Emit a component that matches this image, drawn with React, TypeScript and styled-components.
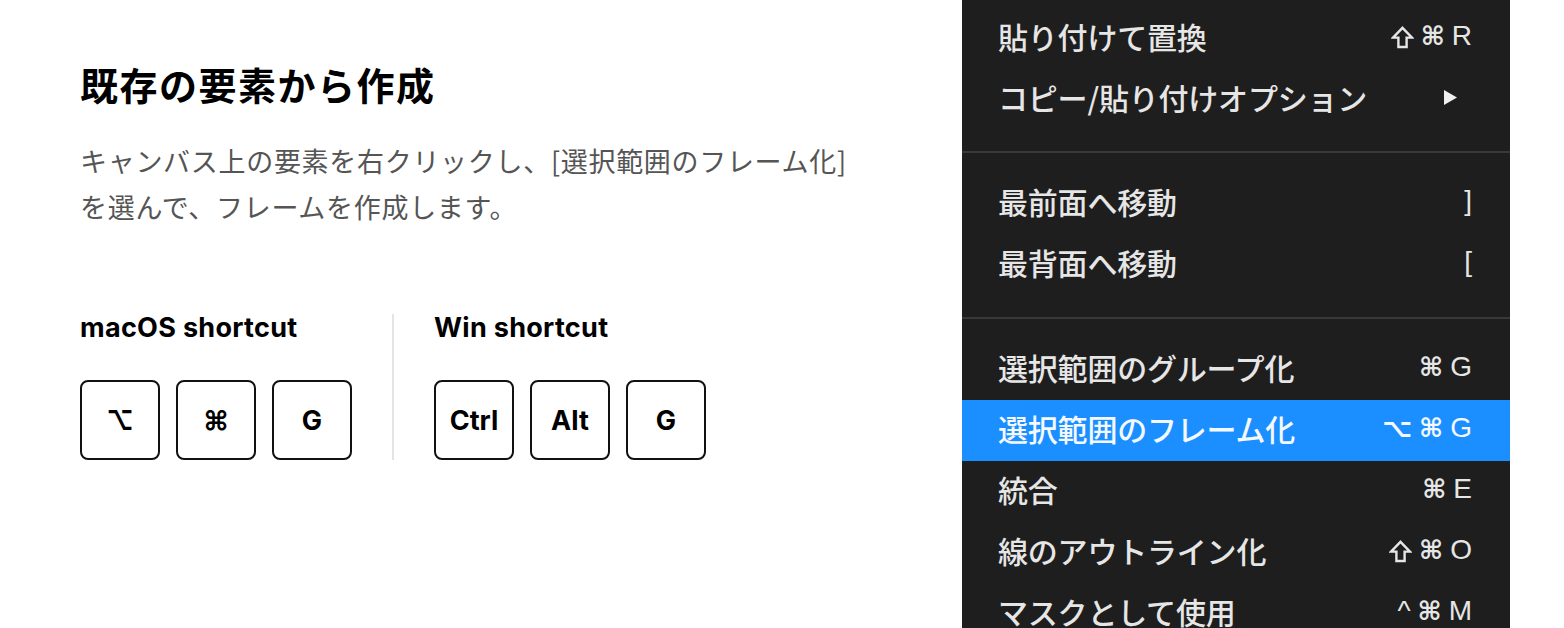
import { Fragment } from "react";
import styled, { createGlobalStyle } from "styled-components";

const GlobalStyle = createGlobalStyle`
  html, body {
    margin: 0;
    padding: 0;
    background: #ffffff;
  }
  body {
    font-family: Inter, "Noto Sans CJK JP", sans-serif;
    color: #111;
  }
`;

type MenuEntry = {
  label: string;
  keys?: string[];
  submenu?: boolean;
  active?: boolean;
};

type MenuBlock = {
  top: number;
  bottom: number;
  items: MenuEntry[];
};

const menuSections: MenuBlock[] = [
  {
    top: 0,
    bottom: 21,
    items: [
      { label: "貼り付けて置換", keys: ["⇧", "⌘", "R"] },
      { label: "コピー/貼り付けオプション", submenu: true },
    ],
  },
  {
    top: 20,
    bottom: 22,
    items: [
      { label: "最前面へ移動", keys: ["]"] },
      { label: "最背面へ移動", keys: ["["] },
    ],
  },
  {
    top: 20,
    bottom: 0,
    items: [
      { label: "選択範囲のグループ化", keys: ["⌘", "G"] },
      { label: "選択範囲のフレーム化", keys: ["⌥", "⌘", "G"], active: true },
      { label: "統合", keys: ["⌘", "E"] },
      { label: "線のアウトライン化", keys: ["⇧", "⌘", "O"] },
      { label: "マスクとして使用", keys: ["^", "⌘", "M"] },
    ],
  },
];

const shortcutGroups = [
  { title: "macOS shortcut", keys: ["⌥", "⌘", "G"] },
  { title: "Win shortcut", keys: ["Ctrl", "Alt", "G"] },
];

const SYMBOLS = ["⌘", "⌥"];

const Page = styled.div`
  display: flex;
  height: 628px;
  overflow: hidden;
  padding-left: 80px;
  box-sizing: border-box;
`;

const Content = styled.section`
  width: 882px;
  flex-shrink: 0;
  padding-top: 59px;
  box-sizing: border-box;
`;

const Heading = styled.h2`
  margin: 0;
  font-family: "Noto Sans CJK JP", sans-serif;
  font-weight: 700;
  font-size: 38px;
  line-height: 49px;
  color: #000;
  letter-spacing: 1.5px;
`;

const Description = styled.p`
  margin: 30px 0 0;
  font-family: "Noto Sans CJK JP", sans-serif;
  font-weight: 400;
  font-size: 27px;
  line-height: 46px;
  letter-spacing: 0.7px;
  color: #555;
`;

const ShortcutRow = styled.div`
  display: flex;
  align-items: stretch;
  margin-top: 84px;
`;

const ShortcutGroup = styled.div`
  display: flex;
  flex-direction: column;
`;

const GroupTitle = styled.div`
  font-family: Inter, sans-serif;
  font-weight: 700;
  font-size: 27px;
  line-height: 28px;
  letter-spacing: 0.3px;
  color: #000;
`;

const KeyRow = styled.div`
  display: flex;
  gap: 16px;
  margin-top: 38px;
`;

const KeyCap = styled.div`
  width: 80px;
  height: 80px;
  box-sizing: border-box;
  border: 2px solid #111;
  border-radius: 8px;
  display: flex;
  align-items: center;
  justify-content: center;
  font-family: Inter, "DejaVu Sans", sans-serif;
  font-weight: 700;
  font-size: 27px;
  color: #000;
`;

const Divider = styled.div`
  width: 2px;
  margin: 0 40px;
  background: #e4e4e4;
`;

const Menu = styled.aside`
  width: 548px;
  flex-shrink: 0;
  background: #1e1e1e;
  display: flex;
  flex-direction: column;
  padding-top: 8px;
  box-sizing: border-box;
`;

const MenuSection = styled.div<{ $top: number; $bottom: number; $rule: boolean }>`
  padding-top: ${({ $top }) => $top}px;
  padding-bottom: ${({ $bottom }) => $bottom}px;
  border-bottom: ${({ $rule }) => ($rule ? "2px solid #393939" : "none")};
`;

const MenuItem = styled.div<{ $active?: boolean }>`
  height: 61px;
  box-sizing: border-box;
  display: flex;
  align-items: center;
  justify-content: space-between;
  padding: 0 38px 5px 36px;
  background: ${({ $active }) => ($active ? "#1b8fff" : "transparent")};
  color: ${({ $active }) => ($active ? "#f4f8ff" : "#e6e6e6")};
`;

const MenuLabel = styled.span`
  font-family: "Noto Sans CJK JP", sans-serif;
  font-weight: 500;
  font-size: 30px;
  line-height: 1;
  letter-spacing: -0.2px;
`;

const MenuKeys = styled.span`
  display: flex;
  align-items: center;
  gap: 7px;
  font-family: "Liberation Sans", sans-serif;
  font-weight: 500;
  font-size: 28px;
  line-height: 1;
`;

const KeySymbol = styled.span<{ $symbol: boolean }>`
  font-family: ${({ $symbol }) => ($symbol ? '"DejaVu Sans", sans-serif' : '"Liberation Sans", sans-serif')};
  font-weight: ${({ $symbol }) => ($symbol ? 700 : 500)};
  font-size: ${({ $symbol }) => ($symbol ? "26px" : "28px")};
`;

const ShiftIcon = styled.svg`
  width: 23px;
  height: 23px;
  margin-top: 2px;
`;

const SubmenuArrow = styled.svg`
  width: 15px;
  height: 17px;
  margin-right: 14px;
`;

function MenuKey({ value }: { value: string }) {
  if (value === "⇧") {
    return (
      <ShiftIcon viewBox="0 0 23 23" aria-label="⇧">
        <path
          d="M11.5 1.8 L21 11.6 H15.6 V21 H7.4 V11.6 H2 Z"
          fill="none"
          stroke="currentColor"
          strokeWidth="2.4"
          strokeLinejoin="miter"
        />
      </ShiftIcon>
    );
  }
  return <KeySymbol $symbol={SYMBOLS.includes(value)}>{value}</KeySymbol>;
}

export default function App() {
  return (
    <>
      <GlobalStyle />
      <Page>
        <Content>
          <Heading>既存の要素から作成</Heading>
          <Description>
            キャンバス上の要素を右クリックし、[選択範囲のフレーム化]
            <br />
            を選んで、フレームを作成します。
          </Description>
          <ShortcutRow>
            {shortcutGroups.map((group, index) => (
              <Fragment key={group.title}>
                {index > 0 ? <Divider /> : null}
                <ShortcutGroup>
                  <GroupTitle>{group.title}</GroupTitle>
                  <KeyRow>
                    {group.keys.map((key) => (
                      <KeyCap key={key}>{key}</KeyCap>
                    ))}
                  </KeyRow>
                </ShortcutGroup>
              </Fragment>
            ))}
          </ShortcutRow>
        </Content>

        <Menu>
          {menuSections.map((section, sIndex) => (
            <MenuSection
              key={sIndex}
              $top={section.top}
              $bottom={section.bottom}
              $rule={sIndex < menuSections.length - 1}
            >
              {section.items.map((item) => (
                <MenuItem key={item.label} $active={item.active}>
                  <MenuLabel>{item.label}</MenuLabel>
                  {item.submenu ? (
                    <SubmenuArrow viewBox="0 0 15 17">
                      <polygon points="1,1 14,8.5 1,16" fill="#f0f0f0" />
                    </SubmenuArrow>
                  ) : (
                    <MenuKeys>
                      {item.keys?.map((k) => (
                        <MenuKey key={k} value={k} />
                      ))}
                    </MenuKeys>
                  )}
                </MenuItem>
              ))}
            </MenuSection>
          ))}
        </Menu>
      </Page>
    </>
  );
}
